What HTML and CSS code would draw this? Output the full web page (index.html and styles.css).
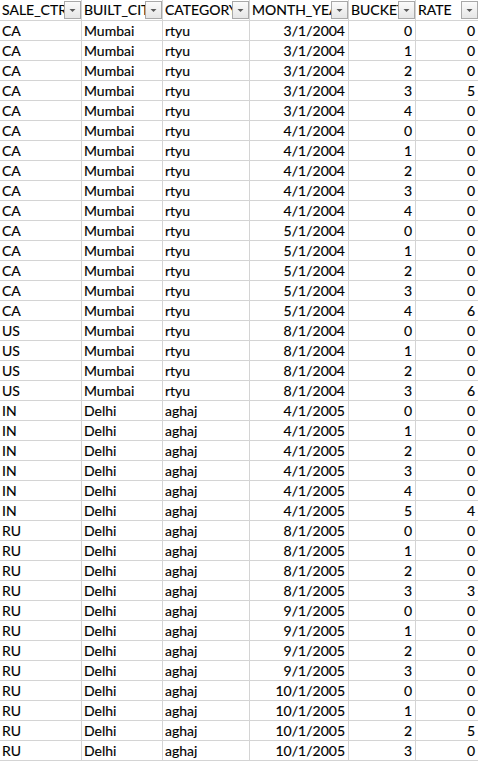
FILE: index.html
```html
<!DOCTYPE html>
<html>
<head>
<meta charset="utf-8">
<link rel="stylesheet" href="styles.css">
</head>
<body>
<table class="sheet">
<colgroup>
<col class="c1"><col class="c2"><col class="c3"><col class="c4"><col class="c5"><col class="c6">
</colgroup>
<thead>
<tr>
<th><span class="hd">SALE_CTRY</span><span class="dd"><svg width="15" height="16" viewBox="0 0 15 16"><polygon points="4.5,7 10.5,7 7.5,10" fill="#5a5a5a"/></svg></span></th>
<th><span class="hd">BUILT_CITY</span><span class="dd"><svg width="15" height="16" viewBox="0 0 15 16"><polygon points="4.5,7 10.5,7 7.5,10" fill="#5a5a5a"/></svg></span></th>
<th><span class="hd">CATEGORY</span><span class="dd"><svg width="15" height="16" viewBox="0 0 15 16"><polygon points="4.5,7 10.5,7 7.5,10" fill="#5a5a5a"/></svg></span></th>
<th><span class="hd">MONTH_YEAR</span><span class="dd"><svg width="15" height="16" viewBox="0 0 15 16"><polygon points="4.5,7 10.5,7 7.5,10" fill="#5a5a5a"/></svg></span></th>
<th><span class="hd">BUCKET</span><span class="dd"><svg width="15" height="16" viewBox="0 0 15 16"><polygon points="4.5,7 10.5,7 7.5,10" fill="#5a5a5a"/></svg></span></th>
<th><span class="hd">RATE</span><span class="dd"><svg width="15" height="16" viewBox="0 0 15 16"><polygon points="4.5,7 10.5,7 7.5,10" fill="#5a5a5a"/></svg></span></th>
</tr>
</thead>
<tbody>
<tr><td>CA</td><td>Mumbai</td><td>rtyu</td><td class="n">3/1/2004</td><td class="n">0</td><td class="n">0</td></tr>
<tr><td>CA</td><td>Mumbai</td><td>rtyu</td><td class="n">3/1/2004</td><td class="n">1</td><td class="n">0</td></tr>
<tr><td>CA</td><td>Mumbai</td><td>rtyu</td><td class="n">3/1/2004</td><td class="n">2</td><td class="n">0</td></tr>
<tr><td>CA</td><td>Mumbai</td><td>rtyu</td><td class="n">3/1/2004</td><td class="n">3</td><td class="n">5</td></tr>
<tr><td>CA</td><td>Mumbai</td><td>rtyu</td><td class="n">3/1/2004</td><td class="n">4</td><td class="n">0</td></tr>
<tr><td>CA</td><td>Mumbai</td><td>rtyu</td><td class="n">4/1/2004</td><td class="n">0</td><td class="n">0</td></tr>
<tr><td>CA</td><td>Mumbai</td><td>rtyu</td><td class="n">4/1/2004</td><td class="n">1</td><td class="n">0</td></tr>
<tr><td>CA</td><td>Mumbai</td><td>rtyu</td><td class="n">4/1/2004</td><td class="n">2</td><td class="n">0</td></tr>
<tr><td>CA</td><td>Mumbai</td><td>rtyu</td><td class="n">4/1/2004</td><td class="n">3</td><td class="n">0</td></tr>
<tr><td>CA</td><td>Mumbai</td><td>rtyu</td><td class="n">4/1/2004</td><td class="n">4</td><td class="n">0</td></tr>
<tr><td>CA</td><td>Mumbai</td><td>rtyu</td><td class="n">5/1/2004</td><td class="n">0</td><td class="n">0</td></tr>
<tr><td>CA</td><td>Mumbai</td><td>rtyu</td><td class="n">5/1/2004</td><td class="n">1</td><td class="n">0</td></tr>
<tr><td>CA</td><td>Mumbai</td><td>rtyu</td><td class="n">5/1/2004</td><td class="n">2</td><td class="n">0</td></tr>
<tr><td>CA</td><td>Mumbai</td><td>rtyu</td><td class="n">5/1/2004</td><td class="n">3</td><td class="n">0</td></tr>
<tr><td>CA</td><td>Mumbai</td><td>rtyu</td><td class="n">5/1/2004</td><td class="n">4</td><td class="n">6</td></tr>
<tr><td>US</td><td>Mumbai</td><td>rtyu</td><td class="n">8/1/2004</td><td class="n">0</td><td class="n">0</td></tr>
<tr><td>US</td><td>Mumbai</td><td>rtyu</td><td class="n">8/1/2004</td><td class="n">1</td><td class="n">0</td></tr>
<tr><td>US</td><td>Mumbai</td><td>rtyu</td><td class="n">8/1/2004</td><td class="n">2</td><td class="n">0</td></tr>
<tr><td>US</td><td>Mumbai</td><td>rtyu</td><td class="n">8/1/2004</td><td class="n">3</td><td class="n">6</td></tr>
<tr><td>IN</td><td>Delhi</td><td>aghaj</td><td class="n">4/1/2005</td><td class="n">0</td><td class="n">0</td></tr>
<tr><td>IN</td><td>Delhi</td><td>aghaj</td><td class="n">4/1/2005</td><td class="n">1</td><td class="n">0</td></tr>
<tr><td>IN</td><td>Delhi</td><td>aghaj</td><td class="n">4/1/2005</td><td class="n">2</td><td class="n">0</td></tr>
<tr><td>IN</td><td>Delhi</td><td>aghaj</td><td class="n">4/1/2005</td><td class="n">3</td><td class="n">0</td></tr>
<tr><td>IN</td><td>Delhi</td><td>aghaj</td><td class="n">4/1/2005</td><td class="n">4</td><td class="n">0</td></tr>
<tr><td>IN</td><td>Delhi</td><td>aghaj</td><td class="n">4/1/2005</td><td class="n">5</td><td class="n">4</td></tr>
<tr><td>RU</td><td>Delhi</td><td>aghaj</td><td class="n">8/1/2005</td><td class="n">0</td><td class="n">0</td></tr>
<tr><td>RU</td><td>Delhi</td><td>aghaj</td><td class="n">8/1/2005</td><td class="n">1</td><td class="n">0</td></tr>
<tr><td>RU</td><td>Delhi</td><td>aghaj</td><td class="n">8/1/2005</td><td class="n">2</td><td class="n">0</td></tr>
<tr><td>RU</td><td>Delhi</td><td>aghaj</td><td class="n">8/1/2005</td><td class="n">3</td><td class="n">3</td></tr>
<tr><td>RU</td><td>Delhi</td><td>aghaj</td><td class="n">9/1/2005</td><td class="n">0</td><td class="n">0</td></tr>
<tr><td>RU</td><td>Delhi</td><td>aghaj</td><td class="n">9/1/2005</td><td class="n">1</td><td class="n">0</td></tr>
<tr><td>RU</td><td>Delhi</td><td>aghaj</td><td class="n">9/1/2005</td><td class="n">2</td><td class="n">0</td></tr>
<tr><td>RU</td><td>Delhi</td><td>aghaj</td><td class="n">9/1/2005</td><td class="n">3</td><td class="n">0</td></tr>
<tr><td>RU</td><td>Delhi</td><td>aghaj</td><td class="n">10/1/2005</td><td class="n">0</td><td class="n">0</td></tr>
<tr><td>RU</td><td>Delhi</td><td>aghaj</td><td class="n">10/1/2005</td><td class="n">1</td><td class="n">0</td></tr>
<tr><td>RU</td><td>Delhi</td><td>aghaj</td><td class="n">10/1/2005</td><td class="n">2</td><td class="n">5</td></tr>
<tr><td>RU</td><td>Delhi</td><td>aghaj</td><td class="n">10/1/2005</td><td class="n">3</td><td class="n">0</td></tr>
</tbody>
</table>
</body>
</html>
```
FILE: styles.css
```css
html, body {
  margin: 0;
  padding: 0;
  overflow: hidden;
  background: #fff;
}
.sheet {
  border-collapse: separate;
  border-spacing: 0;
  table-layout: fixed;
  width: 479px;
  font-family: Lato, "Noto Sans", sans-serif;
  font-size: 14px;
  color: #000;
}
.c1 { width: 82px; }
.c2 { width: 81px; }
.c3 { width: 87px; }
.c4 { width: 99px; }
.c5 { width: 67px; }
.c6 { width: 63px; }
.sheet th,
.sheet td {
  box-sizing: border-box;
  height: 20px;
  padding: 0 3px 0 2px;
  border-right: 1px solid #d4d4d4;
  border-bottom: 1px solid #d4d4d4;
  white-space: nowrap;
  overflow: hidden;
  text-align: left;
  font-weight: normal;
  line-height: 19px;
  vertical-align: top;
  -webkit-text-stroke: 0.15px #000;
}
.sheet th {
  height: 21px;
  line-height: 20px;
  position: relative;
}
.sheet td.n {
  text-align: right;
}
.hd {
  display: block;
  overflow: hidden;
}
.dd {
  position: absolute;
  top: 1px;
  right: 0;
  width: 17px;
  height: 18px;
  box-sizing: border-box;
  border: 1px solid #a9a9a9;
  background: linear-gradient(#fbfbfb, #e6e6e6);
}
.dd svg {
  display: block;
}
```
